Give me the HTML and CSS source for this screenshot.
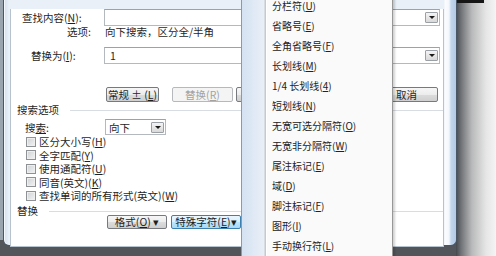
FILE: index.html
```html
<!DOCTYPE html>
<html lang="zh-CN">
<head>
<meta charset="utf-8">
<title>查找和替换</title>
<link rel="stylesheet" href="styles.css">
</head>
<body>
<div class="screen">
  <div class="window">
    <div class="client">
      <div class="row row-find">
        <span class="lbl lbl-find">查找内容(<u>N</u>):</span>
        <div class="combo"><span class="combo-val"></span><span class="drop"><i class="tri"></i></span></div>
      </div>
      <div class="row row-opt">
        <span class="lbl lbl-opt">选项:</span>
        <span class="opt-val">向下搜索，区分全/半角</span>
      </div>
      <div class="row row-rep">
        <span class="lbl lbl-rep">替换为(<u>I</u>):</span>
        <div class="combo"><span class="combo-val">1</span><span class="drop"><i class="tri"></i></span></div>
      </div>
      <div class="row row-btns">
        <button class="btn btn-less">常规 ± (<u>L</u>)</button>
        <button class="btn btn-rep" disabled>替换(<u>R</u>)</button>
        <button class="btn btn-all" aria-label="全部替换"></button>
        <button class="btn btn-next" aria-label="查找下一处"></button>
        <button class="btn btn-cancel">取消</button>
      </div>
      <div class="section section-search"><span class="section-title">搜索选项</span><span class="rule"></span></div>
      <div class="row row-search">
        <span class="lbl lbl-search">搜<u>索</u>:</span>
        <div class="select"><span class="combo-val">向下</span><span class="drop"><i class="tri"></i></span></div>
      </div>
      <ul class="checks">
        <li><span class="box"></span>区分大小写(<u>H</u>)</li>
        <li><span class="box"></span>全字匹配(<u>Y</u>)</li>
        <li><span class="box"></span>使用通配符(<u>U</u>)</li>
        <li><span class="box"></span>同音(英文)(<u>K</u>)</li>
        <li><span class="box"></span>查找单词的所有形式(英文)(<u>W</u>)</li>
      </ul>
      <div class="section section-rep"><span class="section-title">替换</span><span class="rule"></span></div>
      <div class="row row-bottom">
        <button class="btn btn-fmt">格式(<u>O</u>) ▾</button>
        <button class="btn btn-special">特殊字符(<u>E</u>)▾</button>
        <button class="btn btn-nofmt" disabled aria-label="不限定格式"></button>
      </div>
    </div>
  </div>
  <ul class="menu">
    <li>分栏符(<u>U</u>)</li>
    <li>省略号(<u>E</u>)</li>
    <li>全角省略号(<u>F</u>)</li>
    <li>长划线(<u>M</u>)</li>
    <li>1/4 长划线(<u>4</u>)</li>
    <li>短划线(<u>N</u>)</li>
    <li>无宽可选分隔符(<u>O</u>)</li>
    <li>无宽非分隔符(<u>W</u>)</li>
    <li>尾注标记(<u>E</u>)</li>
    <li>域(<u>D</u>)</li>
    <li>脚注标记(<u>F</u>)</li>
    <li>图形(<u>I</u>)</li>
    <li>手动换行符(<u>L</u>)</li>
  </ul>
</div>
</body>
</html>
```
FILE: styles.css
```css
* { box-sizing: border-box; margin: 0; padding: 0; }
html, body { width: 496px; height: 256px; overflow: hidden; }
body {
  font-family: "Noto Sans CJK SC", "Noto Sans", sans-serif;
  font-size: 10.5px;
  line-height: 12px;
  color: #1f1f1f;
}
u { text-underline-offset: 1px; }
ul { list-style: none; }

.screen {
  position: relative;
  width: 496px;
  height: 256px;
  overflow: hidden;
  background:
    linear-gradient(#161616, #161616) 456px 0 / 28px 3px no-repeat,
    linear-gradient(to right, #45494d 0, #6f7276 5px, #b9babb 16px, #e6e6e6 30px, #f4f4f4 40px) 456px 0 / 40px 100% no-repeat,
    linear-gradient(#9aa4ae, #9aa4ae) 0 0 / 3px 240px no-repeat,
    #52565b;
}

/* window frame */
.window {
  position: absolute;
  left: 3px;
  top: 0;
  width: 454px;
  height: 246px;
  border: 1px solid #4a5663;
  border-top: 0;
  border-radius: 0 0 6px 6px;
  padding: 0 12px 7px 6px;
  background:
    linear-gradient(to right, #d3dfec 0, #e9f0f8 5px, #e9f0f8 calc(100% - 12px), #fbfdff calc(100% - 11px), #f3f7fc calc(100% - 7px), #c2d5ec calc(100% - 5px), #b3c9e4 100%);
  box-shadow: inset 1px 0 0 #f4f7fb;
}
.client {
  height: 100%;
  background: #fff;
  border: 1px solid #b7c2cf;
  border-top: 0;
}

.row { display: flex; align-items: center; }
.lbl { flex: none; width: 93px; white-space: nowrap; }

.row-find { margin-top: 9px; height: 17px; }
.lbl-find { padding-left: 11px; }
.row-opt { height: 12px; }
.lbl-opt { padding-left: 56px; width: 94px; }
.row-rep { margin-top: 9px; height: 17px; }
.lbl-rep { padding-left: 20px; }

.combo, .select {
  display: flex;
  align-items: center;
  height: 17px;
  width: 336px;
  border: 1px solid #b4b8bf;
  border-top-color: #9ca2aa;
  background: #fff;
  padding: 1px;
}
.combo-val { flex: 1; padding-left: 4px; line-height: 13px; }
.drop {
  flex: none;
  width: 13px;
  height: 11px;
  border: 1px solid #9aa0a6;
  border-radius: 1px;
  background: linear-gradient(#f4f4f4, #d9d9d9);
  display: flex;
  align-items: center;
  justify-content: center;
}
.tri {
  width: 0; height: 0;
  border-left: 3px solid transparent;
  border-right: 3px solid transparent;
  border-top: 3px solid #1a1a1a;
}

/* buttons */
.btn {
  font: inherit;
  color: #1f1f1f;
  height: 15px;
  line-height: 13px;
  border: 1px solid #767a7e;
  border-radius: 2px;
  background: linear-gradient(#f6f6f6 0, #ececec 50%, #dcdcdc 51%, #cfcfcf 100%);
  white-space: nowrap;
  overflow: hidden;
  flex: none;
}
.btn:disabled { color: #a3a3a3; border-color: #b6b9bc; background: #f4f4f4; }
.row-btns { margin-top: 23px; height: 15px; padding-left: 95px; }
.btn-less { width: 53px; margin-right: 13px; }
.btn-rep { width: 61px; margin-right: 3px; }
.btn-all { width: 65px; margin-right: 4px; }
.btn-next { width: 66px; margin-right: 4px; }
.btn-cancel { width: 63px; }

.section { display: flex; align-items: center; height: 12px; padding-left: 6px; }
.section-search { margin-top: 2px; }
.section-title { flex: none; }
.rule { flex: 1; height: 1px; background: #d8dde3; margin-left: 11px; }
.section-rep { margin-top: 3.5px; height: 10px; line-height: 10px; }

.row-search { margin-top: 3px; height: 16px; }
.lbl-search { padding-left: 14px; width: 94px; line-height: 11px; }
.select { width: 61px; height: 16px; }
.select .combo-val { padding-left: 2px; }

.checks { padding-left: 15px; }
.checks li { display: flex; align-items: center; height: 13.5px; line-height: 11px; white-space: nowrap; }
.box {
  flex: none;
  width: 10px;
  height: 10px;
  margin-right: 3px;
  border: 1px solid #8f9294;
  background: linear-gradient(135deg, #cfd1d3, #f3f3f3);
  box-shadow: inset 0 0 0 1px #eeeeee;
}

.row-bottom { margin-top: -1px; height: 14px; padding-left: 96px; }
.row-bottom .btn { height: 14px; line-height: 12px; }
.btn-fmt { width: 60px; margin-right: 4px; }
.btn-special {
  width: 70px;
  margin-right: 4px;
  border-color: #3c7fb1;
  background: linear-gradient(#eaf6fd 0, #d9f0fc 50%, #bee6fd 51%, #a7d9f5 100%);
}
.btn-nofmt { width: 70px; }

/* popup menu */
.menu {
  position: absolute;
  left: 241px;
  top: -6px;
  width: 152px;
  height: 280px;
  padding-top: 1px;
  border: 1px solid #979797;
  background: linear-gradient(to right, #d5e2f2 0, #e9eff7 22px, #c6c9cd 23px, #c6c9cd 24px, #ffffff 24px, #ffffff 25px, #fafafa 25px);
  box-shadow: 2px 0 2px rgba(0, 0, 0, 0.18);
  font-size: 10px;
  color: #222;
}
.menu li { height: 20px; line-height: 20px; padding-left: 30px; white-space: nowrap; }
```
